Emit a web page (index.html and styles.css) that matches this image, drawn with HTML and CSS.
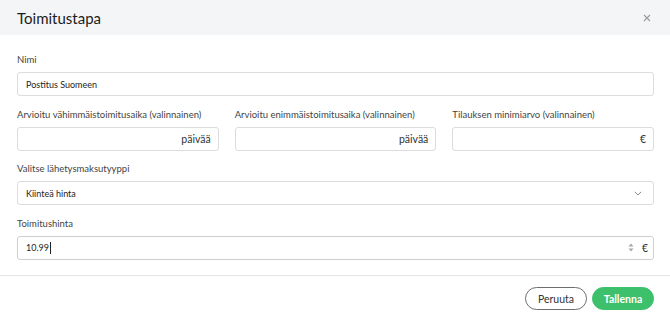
FILE: index.html
```html
<!DOCTYPE html>
<html lang="fi">
<head>
<meta charset="utf-8">
<title>Toimitustapa</title>
<link rel="stylesheet" href="styles.css">
</head>
<body>
<div class="modal">
  <header class="modal-header">
    <h1 class="modal-title">Toimitustapa</h1>
    <button class="close" aria-label="Sulje">
      <svg width="8" height="8" viewBox="0 0 8 8"><path d="M1 1L7 7M7 1L1 7" stroke="#9a9a9a" stroke-width="1.1" fill="none"/></svg>
    </button>
  </header>
  <div class="modal-body">
    <div class="field">
      <label class="label">Nimi</label>
      <div class="input"><span class="value">Postitus Suomeen</span></div>
    </div>
    <div class="row">
      <div class="field">
        <label class="label">Arvioitu vähimmäistoimitusaika (valinnainen)</label>
        <div class="input"><span class="value"></span><span class="suffix">päivää</span></div>
      </div>
      <div class="field">
        <label class="label">Arvioitu enimmäistoimitusaika (valinnainen)</label>
        <div class="input"><span class="value"></span><span class="suffix">päivää</span></div>
      </div>
      <div class="field">
        <label class="label">Tilauksen minimiarvo (valinnainen)</label>
        <div class="input"><span class="value"></span><span class="suffix">€</span></div>
      </div>
    </div>
    <div class="field">
      <label class="label">Valitse lähetysmaksutyyppi</label>
      <div class="input"><span class="value">Kiinteä hinta</span>
        <svg class="chevron" width="8" height="5" viewBox="0 0 8 5"><path d="M0.8 0.8L4 4L7.2 0.8" stroke="#8a8a8a" stroke-width="1" fill="none"/></svg>
      </div>
    </div>
    <div class="field">
      <label class="label">Toimitushinta</label>
      <div class="input focused"><span class="value">10.99<span class="caret"></span></span>
        <svg class="spinner" width="6" height="9" viewBox="0 0 6 9"><path d="M3 0.5L5.5 3.5H0.5Z M3 8.5L5.5 5.5H0.5Z" fill="#a8a8a8"/></svg>
        <span class="suffix euro">€</span>
      </div>
    </div>
  </div>
  <footer class="modal-footer">
    <button class="btn btn-secondary">Peruuta</button>
    <button class="btn btn-primary">Tallenna</button>
  </footer>
</div>
</body>
</html>
```
FILE: styles.css
```css
* { box-sizing: border-box; }
html, body { margin: 0; padding: 0; background: #fff; }
body {
  font-family: Lato, "Noto Sans", "Liberation Sans", sans-serif;
  color: #2b2b2b;
  width: 670px;
  height: 316px;
  overflow: hidden;
}
.modal { display: flex; flex-direction: column; }
.modal-header {
  height: 35px;
  background: #f4f5f6;
  display: flex;
  align-items: center;
  justify-content: space-between;
  padding: 0 17px 0 17px;
}
.modal-title {
  margin: 0;
  font-size: 15px;
  font-weight: 400;
  color: #1c1c1c;
}
.close {
  border: 0;
  background: none;
  padding: 0;
  width: 12px;
  height: 12px;
  display: flex;
  align-items: center;
  justify-content: center;
}
.modal-body {
  padding: 18px 16px 15.5px 17px;
  display: flex;
  flex-direction: column;
  gap: 11.5px;
}
.row {
  display: grid;
  grid-template-columns: 1fr 1fr 1fr;
  column-gap: 16px;
}
.field { display: flex; flex-direction: column; }
.label {
  font-size: 9.5px;
  line-height: 14px;
  color: #444;
  margin-bottom: 5px;
}
.input {
  height: 24px;
  border: 1px solid #dcdcdc;
  border-radius: 3px;
  display: flex;
  align-items: center;
  padding: 0 7px 0 8px;
  font-size: 9px;
  color: #1e1e1e;
  background: #fff;
}
.input.focused { border-color: #cfcfcf; padding-right: 5px; }
.value { flex: 1; display: flex; align-items: center; }
.suffix { color: #333; font-size: 10.5px; }
.euro { margin-left: 8px; }
.caret {
  display: inline-block;
  width: 1px;
  height: 12px;
  background: #222;
  margin-left: 0.5px;
}
.chevron { margin-right: 4px; }
.modal-footer {
  border-top: 1px solid #e6e6e6;
  display: flex;
  justify-content: flex-end;
  gap: 5px;
  padding: 11px 16px 0 0;
}
.btn {
  height: 23px;
  width: 62px;
  border-radius: 12px;
  font-family: Lato, "Noto Sans", "Liberation Sans", sans-serif;
  font-size: 10.5px;
  padding: 0;
  cursor: pointer;
}
.btn-secondary {
  background: #fff;
  border: 1px solid #6e6e6e;
  color: #333;
}
.btn-primary {
  background: #3cc06c;
  border: 1px solid #3cc06c;
  color: #fff;
  font-weight: 700;
}
```
